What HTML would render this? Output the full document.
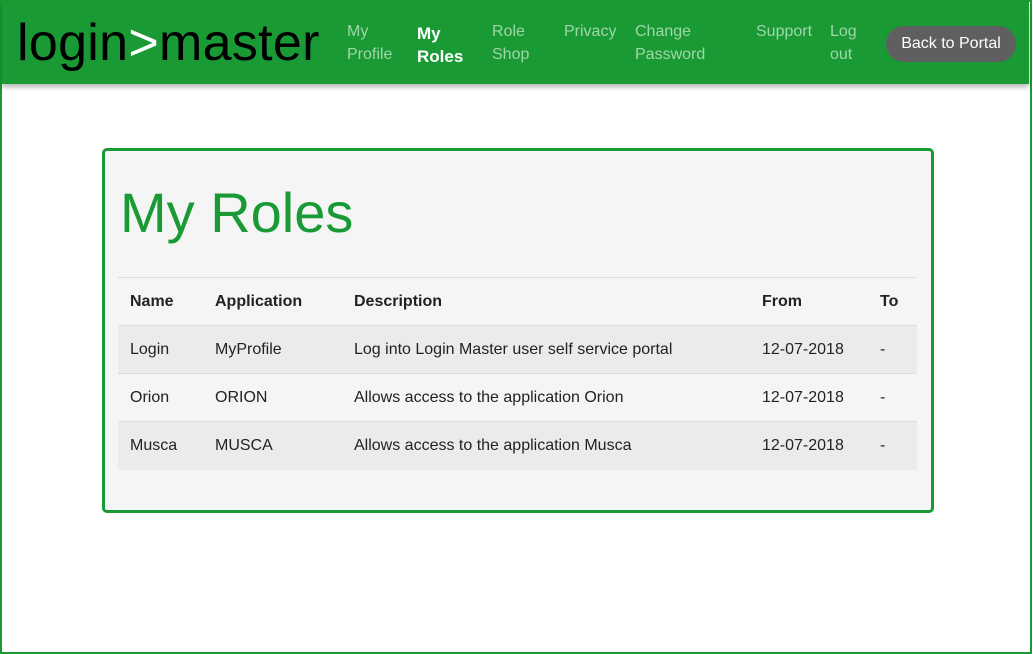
<!DOCTYPE html>
<html><head><meta charset="utf-8"><style>
*{margin:0;padding:0;box-sizing:border-box}
body{width:1033px;height:654px;background:#fff;font-family:"Liberation Sans",sans-serif;position:relative;overflow:hidden}
.frame{position:absolute;left:0;top:0;width:1032px;height:654px;border:2px solid #1a9a35}
.nav{position:absolute;left:2px;top:2px;width:1027px;height:82px;background:#1a9a35;box-shadow:0 3px 5px rgba(0,0,0,.3)}
.logo{position:absolute;left:15px;top:11px;font-size:52px;color:#000;letter-spacing:0.3px;line-height:60px}
.logo span{color:#fff}
.nl{position:absolute;color:#9fd7a8;font-size:16px;line-height:23px}
.nl.a{color:#fff;font-weight:bold;font-size:17px}
.btn{position:absolute;left:886px;top:26px;width:130px;height:36px;border-radius:18px;background:#5f5f5f;color:#fff;font-size:16px;line-height:36px;text-align:center}
.card{position:absolute;left:102px;top:148px;width:832px;height:365px;border:3px solid #1a9a35;border-radius:5px;background:#f5f5f5}
h1{position:absolute;left:15px;top:30px;font-weight:normal;font-size:56px;color:#1a9a35;line-height:64px}
table{position:absolute;left:13px;top:126px;width:799px;border-collapse:collapse;font-size:16px;color:#222}
td,th{text-align:left;padding:0 0 0 12px;height:48px;border-top:1px solid #ddd}
th{font-weight:bold;font-size:16px}
tr.s td{background:#ebebeb}
</style></head><body>
<div class="frame"></div>
<div class="nav">
<div class="logo">login<span>&gt;</span>master</div>
<div class="nl" style="left:345px;top:18px">My<br>Profile</div>
<div class="nl a" style="left:415px;top:20px">My<br>Roles</div>
<div class="nl" style="left:490px;top:18px">Role<br>Shop</div>
<div class="nl" style="left:562px;top:18px">Privacy</div>
<div class="nl" style="left:633px;top:18px">Change<br>Password</div>
<div class="nl" style="left:754px;top:18px">Support</div>
<div class="nl" style="left:828px;top:18px">Log<br>out</div>
</div>
<div class="btn">Back to Portal</div>
<div class="card">
<h1>My Roles</h1>
<table>
<tr><th style="width:85px">Name</th><th style="width:139px">Application</th><th style="width:408px">Description</th><th style="width:118px">From</th><th>To</th></tr>
<tr class="s"><td>Login</td><td>MyProfile</td><td>Log into Login Master user self service portal</td><td>12-07-2018</td><td>-</td></tr>
<tr><td>Orion</td><td>ORION</td><td>Allows access to the application Orion</td><td>12-07-2018</td><td>-</td></tr>
<tr class="s"><td>Musca</td><td>MUSCA</td><td>Allows access to the application Musca</td><td>12-07-2018</td><td>-</td></tr>
</table>
</div>
</body></html>
